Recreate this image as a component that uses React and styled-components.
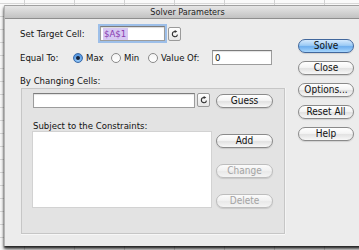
import React from 'react';
import styled, { createGlobalStyle } from 'styled-components';

const Global = createGlobalStyle`
  html, body { margin: 0; padding: 0; }
  body {
    width: 359px; height: 250px; overflow: hidden;
    font-family: "DejaVu Sans Condensed", "Liberation Sans", sans-serif;
    color: #111;
  }
`;

const Desk = styled.div`
  width: 359px; height: 250px; box-sizing: border-box;
  padding: 5px 0 0 4px; overflow: hidden;
  background-color: #fafafa;
  background-image:
    linear-gradient(to right, #d2d2d2 1px, transparent 1px),
    linear-gradient(to bottom, #d8d8d8 1px, transparent 1px);
  background-size: 50px 100%, 100% 13px;
  background-position: 24px 0, 0 3px;
`;

const Window = styled.div`
  width: 362px; height: 241px; box-sizing: border-box;
  display: flex; flex-direction: column;
  background: #ececec;
  border-left: 1px solid #b4b4b4;
  box-shadow: 0 2px 2px rgba(0,0,0,0.75), 0 4px 4px rgba(0,0,0,0.45);
`;

const TitleBar = styled.div`
  height: 14px; box-sizing: border-box; flex: none;
  display: flex; align-items: center; justify-content: center;
  background: linear-gradient(#e6e6e6, #c2c2c2);
  border-top: 1px solid #a0a0a0;
  border-bottom: 1px solid #8e8e8e;
  font-size: 9px; color: #222;
  padding-left: 4px;
`;

const Body = styled.div`
  flex: 1; display: flex;
  padding: 7px 0 0 15px;
`;

const LeftCol = styled.div`
  width: 278px; flex: none;
  display: flex; flex-direction: column;
`;

const RightCol = styled.div`
  display: flex; flex-direction: column; gap: 8px;
  padding-top: 13px;
`;

const Row = styled.div`
  display: flex; align-items: center;
  height: ${p => p.$h || 15}px;
  margin-top: ${p => p.$mt || 0}px;
`;

const Label = styled.span`
  font-size: 9.5px; line-height: 11px;
  width: ${p => (p.$w ? `${p.$w}px` : 'auto')};
  flex: none;
  color: #111;
`;

const TextBox = styled.div`
  box-sizing: border-box;
  width: ${p => p.$w}px; height: 15px;
  background: #fff;
  border: 1px solid #9c9c9c;
  border-top-color: #7c7c7c;
  box-shadow: ${p => (p.$focus ? '0 0 0 2px #9dbfe9, inset 0 1px 1px rgba(0,0,0,0.15)' : 'inset 0 1px 1px rgba(0,0,0,0.12)')};
  font-size: 9.5px; line-height: 13px;
  padding-left: 2px;
  display: flex; align-items: center;
  flex: none;
`;

const Selected = styled.span`
  background: #d7c8f3;
  color: #8a3bb0;
  padding: 0 2px 0 1px;
  line-height: 12px;
`;

const RefButton = styled.div`
  box-sizing: border-box; flex: none;
  width: 13px; height: 14px;
  margin-left: ${p => p.$ml}px;
  border: 1px solid #9a9a9a; border-radius: 2px;
  background: linear-gradient(#ffffff, #e6e6e6);
  display: flex; align-items: center; justify-content: center;
`;

const RadioItem = styled.div`
  display: flex; align-items: center;
  width: ${p => p.$w}px; flex: none;
`;

const RadioDot = styled.span`
  box-sizing: border-box;
  width: 10px; height: 10px; border-radius: 50%;
  flex: none; margin-right: 3px;
  display: flex; align-items: center; justify-content: center;
  border: 1px solid ${p => (p.$on ? '#3a6aa8' : '#8a8a8a')};
  background: ${p => (p.$on
    ? 'radial-gradient(circle at 50% 70%, #a9d4fb 0%, #5d9fe6 60%, #3f7fcf 100%)'
    : 'linear-gradient(#f4f4f4, #ffffff)')};
  &::after {
    content: '';
    display: ${p => (p.$on ? 'block' : 'none')};
    width: 4px; height: 4px; border-radius: 50%;
    background: #14223a;
  }
`;

const Group = styled.div`
  box-sizing: border-box;
  width: 264px; height: 146px;
  margin: 2px 0 0 1px;
  background: #e3e3e3;
  border: 1px solid #c6c6c6;
  box-shadow: 0 1px 0 #f7f7f7, 1px 0 0 #f4f4f4;
  padding: 4px 0 0 11px;
  display: flex; flex-direction: column;
`;

const GroupRow = styled.div`
  display: flex; align-items: flex-start;
`;

const ListRow = styled.div`
  display: flex; margin-top: 2px;
`;

const ListBox = styled.div`
  width: 178px; height: 75px; flex: none;
  background: #fff;
  box-shadow: 0 0 0 1px #d2d2d2;
`;

const ListButtons = styled.div`
  display: flex; flex-direction: column; gap: 16px;
  margin-left: 5px; padding-top: 2px;
`;

const Btn = styled.button`
  box-sizing: border-box;
  width: ${p => p.$w || 56}px; height: 14px;
  margin: ${p => p.$m || 0};
  padding: 0; border-radius: 7px;
  border: 1px solid ${p => (p.$primary ? '#41679c' : p.disabled ? '#bdbdbd' : '#8a8a8a')};
  background: ${p => (p.$primary
    ? 'linear-gradient(#d4e9fd 0%, #9ccbf5 45%, #6eaeee 55%, #a6d6fd 100%)'
    : p.disabled
      ? 'linear-gradient(#fbfbfb 0%, #f1f1f1 45%, #e9e9e9 55%, #f4f4f4 100%)'
      : 'linear-gradient(#ffffff 0%, #f4f4f4 45%, #e2e2e2 55%, #f8f8f8 100%)')};
  font-family: inherit; font-size: 10px; line-height: 12px;
  color: ${p => (p.disabled ? '#a3a3a3' : '#111')};
  text-align: center;
  box-shadow: 0 1px 1px rgba(0,0,0,0.12);
`;

const RefreshIcon = () => (
  <svg width="8" height="8" viewBox="0 0 8 8">
    <path d="M6.5 4.6 A2.6 2.6 0 1 1 4.1 1.5" fill="none" stroke="#333" strokeWidth="1.1" />
    <path d="M3.7 0 L6.3 1.5 L3.7 3 Z" fill="#333" />
  </svg>
);

export default function App() {
  return (
    <>
      <Global />
      <Desk>
        <Window>
          <TitleBar>Solver Parameters</TitleBar>
          <Body>
            <LeftCol>
              <Row>
                <Label $w={80}>Set Target Cell:</Label>
                <TextBox $w={65} $focus><Selected>$A$1</Selected></TextBox>
                <RefButton $ml={3}><RefreshIcon /></RefButton>
              </Row>
              <Row $mt={9}>
                <Label $w={53}>Equal To:</Label>
                <RadioItem $w={38}><RadioDot $on /><Label>Max</Label></RadioItem>
                <RadioItem $w={37}><RadioDot /><Label>Min</Label></RadioItem>
                <RadioItem $w={64}><RadioDot /><Label>Value Of:</Label></RadioItem>
                <TextBox $w={60}>0</TextBox>
              </Row>
              <Row $mt={10} $h={11}>
                <Label>By Changing Cells:</Label>
              </Row>
              <Group>
                <GroupRow>
                  <TextBox $w={162} />
                  <RefButton $ml={2}><RefreshIcon /></RefButton>
                  <Btn $w={57} $m="1px 0 0 6px">Guess</Btn>
                </GroupRow>
                <Row $mt={12} $h={10}>
                  <Label>Subject to the Constraints:</Label>
                </Row>
                <ListRow>
                  <ListBox />
                  <ListButtons>
                    <Btn $w={57}>Add</Btn>
                    <Btn $w={57} disabled>Change</Btn>
                    <Btn $w={57} disabled>Delete</Btn>
                  </ListButtons>
                </ListRow>
              </Group>
            </LeftCol>
            <RightCol>
              <Btn $primary>Solve</Btn>
              <Btn>Close</Btn>
              <Btn>Options...</Btn>
              <Btn>Reset All</Btn>
              <Btn>Help</Btn>
            </RightCol>
          </Body>
        </Window>
      </Desk>
    </>
  );
}
